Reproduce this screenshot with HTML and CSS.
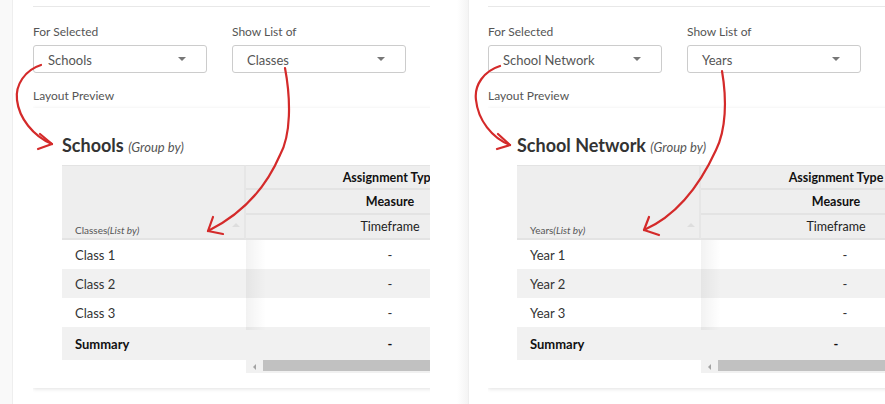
FILE: index.html
```html
<!DOCTYPE html>
<html lang="en">
<head>
    <meta charset="UTF-8">
    <meta name="viewport" content="width=device-width, initial-scale=1.0">
    <title>Layout Preview</title>
    <link rel="stylesheet" href="styles.css">
</head>
<body>
    <div class="shots">
        <!-- Schools / Classes -->
        <section class="shot shot-a">
            <div class="strip"></div>
            <div class="page">
                <div class="content">
                    <div class="rule"></div>
                    <div class="fields">
                        <div class="field">
                            <label>For Selected</label>
                            <div class="select"><span>Schools</span><i class="caret"></i></div>
                        </div>
                        <div class="field">
                            <label>Show List of</label>
                            <div class="select"><span>Classes</span><i class="caret"></i></div>
                        </div>
                    </div>
                    <p class="preview-label">Layout Preview</p>
                    <div class="card">
                        <h2>Schools <em>(Group by)</em></h2>
                        <div class="grid">
                            <div class="fixed">
                                <div class="hcell"><span>Classes<em>(List by)</em></span><i class="sort"></i></div>
                                <div class="row">Class 1</div>
                                <div class="row alt">Class 2</div>
                                <div class="row">Class 3</div>
                                <div class="row alt total">Summary</div>
                            </div>
                            <div class="scroll">
                                <div class="hrow first">Assignment Type</div>
                                <div class="hrow">Measure</div>
                                <div class="hrow plain">Timeframe</div>
                                <div class="row">-</div>
                                <div class="row alt">-</div>
                                <div class="row">-</div>
                                <div class="row alt total">-</div>
                                <div class="scrollbar"><span class="sb-arrow"></span><span class="sb-thumb"></span></div>
                                <div class="fade"></div>
                            </div>
                        </div>
                    </div>
                </div>
            </div>
        </section>

        <!-- School Network / Years -->
        <section class="shot shot-b">
            <div class="strip"></div>
            <div class="page">
                <div class="content">
                    <div class="rule"></div>
                    <div class="fields">
                        <div class="field">
                            <label>For Selected</label>
                            <div class="select"><span>School Network</span><i class="caret"></i></div>
                        </div>
                        <div class="field">
                            <label>Show List of</label>
                            <div class="select"><span>Years</span><i class="caret"></i></div>
                        </div>
                    </div>
                    <p class="preview-label">Layout Preview</p>
                    <div class="card">
                        <h2>School Network <em>(Group by)</em></h2>
                        <div class="grid">
                            <div class="fixed">
                                <div class="hcell"><span>Years<em>(List by)</em></span><i class="sort"></i></div>
                                <div class="row">Year 1</div>
                                <div class="row alt">Year 2</div>
                                <div class="row">Year 3</div>
                                <div class="row alt total">Summary</div>
                            </div>
                            <div class="scroll">
                                <div class="hrow first">Assignment Type</div>
                                <div class="hrow">Measure</div>
                                <div class="hrow plain">Timeframe</div>
                                <div class="row shift">-</div>
                                <div class="row alt shift">-</div>
                                <div class="row shift">-</div>
                                <div class="row alt total">-</div>
                                <div class="scrollbar"><span class="sb-arrow"></span><span class="sb-thumb"></span></div>
                                <div class="fade"></div>
                            </div>
                        </div>
                    </div>
                </div>
            </div>
        </section>
    </div>

    <!-- hand drawn annotations -->
    <svg class="notes" width="885" height="404" viewBox="0 0 885 404">
        <g fill="none" stroke="#d42a2a" stroke-width="2.2" stroke-linecap="round" stroke-linejoin="round">
            <path d="M41,65 C25,70 15,85 17,100 C19,118 33,136 52,144"/>
            <path d="M40,134 L52,144 L38,149"/>
            <path d="M285,68 C291,100 291,135 280,155 C265,190 240,215 208,231"/>
            <path d="M213,217 L208,231 L223,234"/>

            <path d="M500,66 C484,71 474,85 476,100 C478,120 492,138 510,145"/>
            <path d="M498,134 L510,145 L497,149"/>
            <path d="M722,71 C727,100 726,130 716,150 C700,185 678,215 644,230"/>
            <path d="M649,217 L644,230 L659,235"/>
        </g>
    </svg>
</body>
</html>
```

FILE: styles.css
```css
* {
    margin: 0;
    padding: 0;
    box-sizing: border-box;
}

body {
    font-family: Lato, 'Noto Sans', sans-serif;
    background-color: #ffffff;
    color: #333333;
    position: relative;
    width: 885px;
    height: 404px;
    overflow: hidden;
}

.shots {
    display: flex;
    height: 404px;
}

.shot {
    display: flex;
    flex: none;
}

.shot-a {
    width: 457px;
}

.shot-b {
    width: 428px;
}

.strip {
    width: 13px;
    background-color: #f9f9f9;
    border-right: 1px solid #eeeeee;
}

.shot-b .strip {
    width: 12px;
    background: linear-gradient(to right, #ffffff, #f4f4f4);
}

.page {
    flex: 1;
    padding-left: 20px;
}

.shot-b .page {
    padding-left: 19px;
}

.content {
    width: 397px;
    height: 100%;
    overflow: hidden;
}

.rule {
    margin-top: 6px;
    border-top: 1px solid #e8e8e8;
}

/* selects */
.fields {
    display: flex;
    gap: 25px;
    margin-top: 17px;
}

.field {
    width: 174px;
}

.field label,
.preview-label {
    display: block;
    font-size: 12px;
    line-height: 16px;
    color: #555555;
}

.field label {
    margin-bottom: 5px;
}

.select {
    height: 28px;
    border: 1px solid #cccccc;
    border-radius: 3px;
    display: flex;
    align-items: center;
    justify-content: space-between;
    padding: 2px 20px 0 14px;
    font-size: 13px;
    color: #555555;
}

.caret {
    margin-top: -2px;
    border-left: 4px solid transparent;
    border-right: 4px solid transparent;
    border-top: 4px solid #777777;
}

.preview-label {
    margin-top: 15px;
}

/* preview card */
.card {
    width: 560px;
    margin-top: 4px;
    padding: 25px 0 15px 29px;
    box-shadow: 0 1px 4px rgba(0, 0, 0, 0.12);
}

.card h2 {
    height: 24px;
    font-size: 18px;
    line-height: 24px;
    font-weight: bold;
    color: #333333;
    margin-bottom: 8px;
}

.card h2 em {
    font-size: 13px;
    line-height: 1;
    font-weight: normal;
    color: #555555;
}

.grid {
    display: flex;
}

.fixed {
    width: 184px;
    flex: none;
}

.scroll {
    width: 288px;
    flex: none;
    position: relative;
}

.shot-b .scroll {
    width: 270px;
}

.hcell {
    height: 75px;
    background-color: #eeeeee;
    border-top: 1px solid #e3e3e3;
    border-bottom: 2px solid #e3e3e3;
    border-right: 2px solid #e6e6e6;
    display: flex;
    align-items: flex-end;
    justify-content: space-between;
    padding: 0 4px 2px 13px;
    font-size: 10px;
    line-height: 12px;
    color: #555555;
}

.sort {
    margin-bottom: 9px;
    border-left: 4px solid transparent;
    border-right: 4px solid transparent;
    border-bottom: 4px solid #dddddd;
}

.hrow {
    height: 25px;
    background-color: #eeeeee;
    border-bottom: 2px solid #e3e3e3;
    display: flex;
    align-items: center;
    justify-content: center;
    font-size: 12.5px;
    font-weight: bold;
    color: #111111;
}

.hrow.first {
    border-top: 1px solid #e3e3e3;
}

.hrow.plain {
    font-weight: normal;
    color: #222222;
}

.row {
    height: 29px;
    display: flex;
    align-items: center;
    font-size: 13px;
    color: #333333;
}

.fixed .row {
    padding-left: 13px;
}

.scroll .row {
    justify-content: center;
}

.scroll .row.shift {
    padding-left: 18px;
}

.row.alt {
    background-color: #f1f1f1;
}

.row.total {
    height: 33px;
    font-weight: bold;
    color: #111111;
}

.fade {
    position: absolute;
    left: 0;
    top: 75px;
    width: 20px;
    height: 90px;
    background: linear-gradient(to right, rgba(0, 0, 0, 0.05), rgba(0, 0, 0, 0));
}

.scrollbar {
    height: 13px;
    display: flex;
    background-color: #f1f1f1;
}

.sb-arrow {
    width: 17px;
    display: flex;
    align-items: center;
    justify-content: center;
}

.sb-arrow::before {
    content: "";
    border-top: 3px solid transparent;
    border-bottom: 3px solid transparent;
    border-right: 3px solid #a3a3a3;
}

.sb-thumb {
    flex: 1;
    height: 11px;
    background-color: #c1c1c1;
}

.notes {
    position: absolute;
    top: 0;
    left: 0;
    pointer-events: none;
}
```
